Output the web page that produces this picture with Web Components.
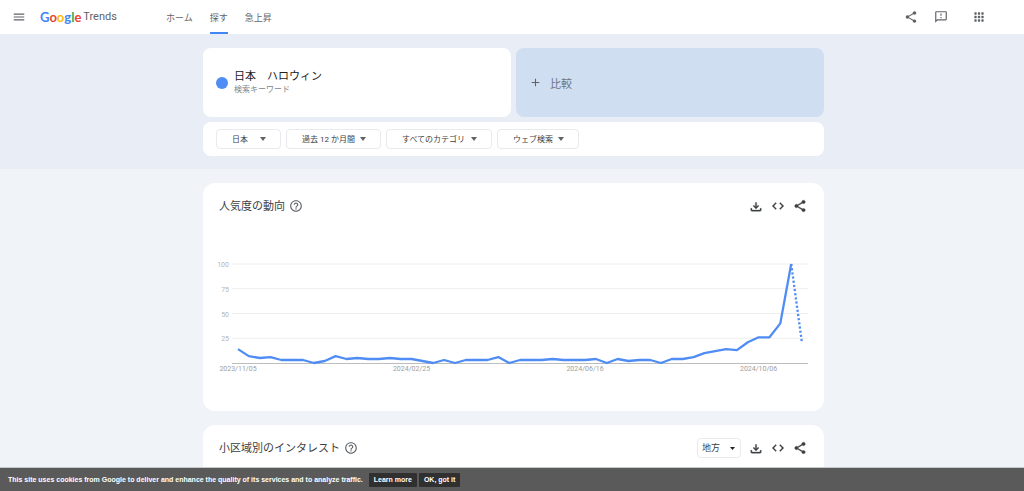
<!DOCTYPE html>
<html lang="ja">
<head>
<meta charset="utf-8">
<meta name="viewport" content="width=device-width, initial-scale=1">
<title>Google Trends</title>
<style>
    body {
        margin: 0;
        font-family: Roboto, "Noto Sans CJK JP", sans-serif;
        color: #3c4043;
    }
</style>
</head>
<body>
<trends-app></trends-app>

<script>
const ICONS = {
    menu: `<path d="M3 18h18v-2H3v2zm0-5h18v-2H3v2zm0-7v2h18V6H3z"/>`,
    share: `<path d="M18 16.100c-.8 0-1.400.3-2 .8l-7.100-4.200c.1-.2.1-.5.1-.7s0-.5-.1-.7L16 7.200c.5.500 1.200.8 2 .8 1.700 0 3-1.300 3-3s-1.300-3-3-3-3 1.300-3 3c0 .2 0 .5.1.7L8 9.800C7.500 9.300 6.800 9 6 9c-1.700 0-3 1.300-3 3s1.300 3 3 3c.8 0 1.500-.3 2-.8l7.100 4.200c-.1.2-.1.400-.1.600 0 1.600 1.300 2.900 3 2.900s3-1.300 3-2.900-1.300-2.900-3-2.900z"/>`,
    feedback: `<path d="M20 2H4c-1.100 0-2 .9-2 2v18l4-4h14c1.100 0 2-.9 2-2V4c0-1.100-.9-2-2-2zm0 14H5.200L4 17.200V4h16v12zM11 12h2v2h-2zm0-6h2v4h-2z"/>`,
    apps: [5, 11, 17].map(y => [5, 11, 17].map(x => `<rect x="${x - 1}" y="${y - 1}" width="4" height="4" rx="1"/>`).join("")).join(""),
    add: `<path d="M19 13h-6v6h-2v-6H5v-2h6V5h2v6h6v2z"/>`,
    help: `<path d="M11 18h2v-2h-2v2zm1-16C6.480 2 2 6.480 2 12s4.480 10 10 10 10-4.480 10-10S17.520 2 12 2zm0 18c-4.410 0-8-3.590-8-8s3.590-8 8-8 8 3.590 8 8-3.590 8-8 8zm0-14c-2.210 0-4 1.790-4 4h2c0-1.100.9-2 2-2s2 .9 2 2c0 2-3 1.750-3 5h2c0-2.250 3-2.500 3-5 0-2.210-1.790-4-4-4z"/>`,
    download: `<path d="M19 16v3H5v-3H3v3c0 1.100.9 2 2 2h14c1.100 0 2-.9 2-2v-3h-2zm-2-4l-1.400-1.400L13 13.200V6h-2v7.200L8.400 10.600 7 12l5 5 5-5z"/>`,
    code: `<path d="M9.400 16.600L4.800 12l4.600-4.600L8 6l-6 6 6 6 1.400-1.400zm5.200 0l4.600-4.600-4.600-4.600L16 6l6 6-6 6-1.400-1.400z"/>`
}

function define(name, html) {
    customElements.define(name, class extends HTMLElement {
        constructor() {
            super()
            this.attachShadow({ mode: "open" }).innerHTML = html
        }
    })
}

class TrendsIcon extends HTMLElement {
    connectedCallback() {
        const root = this.shadowRoot ?? this.attachShadow({ mode: "open" })
        root.innerHTML = `
            <style>
                :host { display: inline-flex; width: 14px; height: 14px; flex: none; }
                svg {
                    width: 100%;
                    height: 100%;
                    fill: currentColor;
                    stroke: currentColor;
                    stroke-width: var(--icon-stroke, 0);
                }
            </style>
            <svg viewBox="0 0 24 24" aria-hidden="true">${ICONS[this.getAttribute("name")]}</svg>
        `
    }
}
customElements.define("trends-icon", TrendsIcon)

class IconButton extends HTMLElement {
    connectedCallback() {
        const root = this.shadowRoot ?? this.attachShadow({ mode: "open" })
        root.innerHTML = `
            <style>
                :host { display: inline-flex; flex: none; }
                button {
                    display: flex;
                    align-items: center;
                    justify-content: center;
                    width: 22px;
                    height: 22px;
                    padding: 0;
                    border: 0;
                    border-radius: 50%;
                    background: none;
                    color: inherit;
                    cursor: pointer;
                }
            </style>
            <button type="button" aria-label="${this.getAttribute("label")}">
                <trends-icon name="${this.getAttribute("icon")}"></trends-icon>
            </button>
        `
    }
}
customElements.define("icon-button", IconButton)

class FilterSelect extends HTMLElement {
    connectedCallback() {
        const root = this.shadowRoot ?? this.attachShadow({ mode: "open" })
        const options = this.getAttribute("options").split("|")
        root.innerHTML = `
            <style>
                :host { display: inline-grid; align-items: center; color: #3c4043; }
                select, svg { grid-area: 1 / 1; }
                select {
                    appearance: none;
                    box-sizing: border-box;
                    width: 100%;
                    height: 20px;
                    margin: 0;
                    padding: 0 25px 0 15px;
                    border: 1px solid #e8eaed;
                    border-radius: 4px;
                    background: #fff;
                    color: inherit;
                    font: inherit;
                    font-size: 8px;
                }
                svg {
                    justify-self: end;
                    width: 6px;
                    height: 4px;
                    margin-right: 15px;
                    fill: #5f6368;
                    pointer-events: none;
                }
                :host([compact]) select { padding: 0 19px 0 4px; font-size: 9px; }
                :host([compact]) svg { width: 5px; height: 3px; margin-right: 6px; fill: #202124; }
            </style>
            <select aria-label="${this.getAttribute("label")}">
                ${options.map(text => `<option>${text}</option>`).join("")}
            </select>
            <svg viewBox="0 0 6 4" preserveAspectRatio="none" aria-hidden="true"><path d="M0 0h6L3 4z"/></svg>
        `
    }
}
customElements.define("filter-select", FilterSelect)

define("trends-header", `
    <style>
        :host {
            display: flex;
            align-items: center;
            height: 34px;
            flex: none;
            padding: 0 34px 0 8px;
            background: #fff;
            color: #5f6368;
        }
        .brand {
            display: flex;
            align-items: center;
            gap: 2px;
            min-width: 126px;
            margin-left: 10px;
            color: #5f6368;
            font-size: 11px;
            line-height: 16px;
            text-decoration: none;
        }
        .google { font-family: Lato, sans-serif; font-size: 13px; font-weight: 700; }
        .b { color: #4285f4; }
        .r { color: #ea4335; }
        .y { color: #fbbc04; }
        .g { color: #34a853; }
        nav { display: flex; align-self: stretch; gap: 17px; }
        nav a {
            display: flex;
            align-items: center;
            box-sizing: border-box;
            border-block: 2px solid transparent;
            color: inherit;
            font-size: 9px;
            text-decoration: none;
        }
        nav a[aria-current] { border-bottom-color: #4285f4; }
        .tools { display: flex; gap: 8px; margin-left: auto; }
        .apps { margin-left: 8px; }
    </style>
    <icon-button icon="menu" label="メニュー"></icon-button>
    <a class="brand" href="#"><span class="google"><span class="b">G</span><span class="r">o</span><span class="y">o</span><span class="b">g</span><span class="g">l</span><span class="r">e</span></span><span>Trends</span></a>
    <nav>
        <a href="#home">ホーム</a>
        <a href="#explore" aria-current="page">探す</a>
        <a href="#trending">急上昇</a>
    </nav>
    <div class="tools">
        <icon-button icon="share" label="共有"></icon-button>
        <icon-button icon="feedback" label="フィードバック"></icon-button>
        <icon-button class="apps" icon="apps" label="アプリ"></icon-button>
    </div>
`)

define("search-term", `
    <style>
        :host {
            display: flex;
            align-items: center;
            gap: 6px;
            padding: 1px 13px 0;
            border-radius: 8px;
            background: #fff;
        }
        .dot { width: 12px; height: 12px; border-radius: 50%; background: #4f8df5; }
        .term { color: #202124; font-size: 11px; line-height: 14px; white-space: pre; }
        .kind { color: #80868b; font-size: 8px; line-height: 12px; }
    </style>
    <span class="dot"></span>
    <div>
        <div class="term"><slot></slot></div>
        <div class="kind"><slot name="kind"></slot></div>
    </div>
`)

define("compare-button", `
    <style>
        :host { display: grid; }
        button {
            display: flex;
            align-items: center;
            gap: 8px;
            padding: 0 13px;
            border: 0;
            border-radius: 8px;
            background: #d0def1;
            color: #6b7684;
            font: inherit;
            font-size: 11px;
            cursor: pointer;
        }
        trends-icon { width: 13px; height: 13px; color: #5f6368; }
    </style>
    <button type="button"><trends-icon name="add"></trends-icon><slot></slot></button>
`)

define("explore-panel", `
    <style>
        :host {
            display: grid;
            gap: 5px;
            padding: 14px 200px 13px 203px;
            background: #e9eef6;
        }
        .terms { display: grid; grid-template-columns: 1fr 1fr; grid-auto-rows: 69px; gap: 5px; }
        .filters {
            display: flex;
            gap: 5px;
            padding: 7px 13px;
            border-radius: 8px;
            background: #fff;
        }
        .geo { min-width: 65px; }
    </style>
    <div class="terms">
        <search-term>日本　ハロウィン<span slot="kind">検索キーワード</span></search-term>
        <compare-button>比較</compare-button>
    </div>
    <div class="filters">
        <filter-select class="geo" label="地域" options="日本"></filter-select>
        <filter-select label="期間" options="過去 12 か月間"></filter-select>
        <filter-select label="カテゴリ" options="すべてのカテゴリ"></filter-select>
        <filter-select label="検索の種類" options="ウェブ検索"></filter-select>
    </div>
`)

define("widget-card", `
    <style>
        :host {
            display: block;
            padding: 12px 13px 35px 16px;
            border-radius: 12px;
            background: #fff;
        }
        header { display: flex; align-items: center; min-height: 22px; }
        h2 {
            margin: 2px 0 0;
            color: #3c4043;
            font-size: 11px;
            font-weight: 400;
            line-height: 16px;
        }
        .help { color: #5f6368; }
        .actions {
            display: flex;
            align-items: center;
            margin-left: auto;
            color: #3c4043;
            --icon-stroke: 0.6;
        }
        ::slotted([slot="action"]) { margin-right: 4px; }
    </style>
    <header>
        <h2><slot name="title"></slot></h2>
        <icon-button class="help" icon="help" label="ヘルプ"></icon-button>
        <div class="actions">
            <slot name="action"></slot>
            <icon-button icon="download" label="CSV"></icon-button>
            <icon-button icon="code" label="埋め込む"></icon-button>
            <icon-button icon="share" label="共有"></icon-button>
        </div>
    </header>
    <slot></slot>
`)

class TrendChart extends HTMLElement {
    static values = [
        14, 7, 5, 6, 3, 3, 3, 0, 2, 7, 4, 5, 4, 4, 5, 4, 4, 2,
        0, 3, 0, 3, 3, 3, 6, 0, 3, 3, 3, 4, 3, 3, 3, 4, 0, 4,
        2, 3, 3, 0, 4, 4, 6, 10, 12, 14, 13, 21, 26, 26, 40, 100, 20
    ]

    // week index -> label
    static dates = { 0: "2023/11/05", 16: "2024/02/25", 32: "2024/06/16", 48: "2024/10/06" }

    connectedCallback() {
        const root = this.shadowRoot ?? this.attachShadow({ mode: "open" })
        const { values, dates } = TrendChart
        const left = 19, right = 583, top = 8, base = 107
        const x = i => left + i * (right - left) / (values.length - 1)
        const y = v => base - v * (base - top) / 100
        const points = values.map((v, i) => `${x(i).toFixed(1)},${y(v).toFixed(1)}`)

        const grid = [25, 50, 75, 100].map(v => `
            <line class="grid" x1="13" x2="589" y1="${y(v)}" y2="${y(v)}"/>
            <text class="tick" x="10" y="${y(v) + 3}" text-anchor="end">${v}</text>
        `).join("")
        const labels = Object.entries(dates).map(([i, text]) =>
            `<text class="date" x="${x(i)}" y="115" text-anchor="middle">${text}</text>`
        ).join("")

        root.innerHTML = `
            <style>
                :host { display: block; margin: 39px 3px 0 0; }
                svg { display: block; width: 100%; overflow: visible; }
                text { font-family: Roboto, sans-serif; font-size: 7px; }
                .tick { fill: #b4b4b4; }
                .date { fill: #9e9e9e; }
                .grid { stroke: #eee; }
                .axis { stroke: #bdbdbd; }
                polyline { fill: none; stroke: #4f8df5; stroke-width: 2.3; stroke-linejoin: round; }
                .partial { stroke-dasharray: 2.2 2; }
            </style>
            <svg viewBox="0 0 589 120" role="img" aria-label="人気度の動向">
                ${grid}
                <line class="axis" x1="13" x2="589" y1="${base + 0.5}" y2="${base + 0.5}"/>
                ${labels}
                <polyline points="${points.slice(0, -1).join(" ")}"/>
                <polyline class="partial" points="${points.slice(-2).join(" ")}"/>
            </svg>
        `
    }
}
customElements.define("trend-chart", TrendChart)

define("cookie-bar", `
    <style>
        :host {
            display: flex;
            align-items: center;
            gap: 2px;
            flex: none;
            height: 23px;
            padding: 0 8px;
            border-top: 1px solid #c4c9cc;
            background: #5a5a5a;
            color: #fff;
            font-family: "Liberation Sans", Arial, sans-serif;
            font-size: 7px;
            font-weight: 700;
        }
        span { margin-right: 4px; }
        a, button {
            box-sizing: border-box;
            height: 14px;
            padding: 0 5px;
            border: 0;
            border-radius: 1px;
            background: #303030;
            color: inherit;
            font: inherit;
            line-height: 14px;
            text-decoration: none;
        }
    </style>
    <span>This site uses cookies from Google to deliver and enhance the quality of its services and to analyze traffic.</span>
    <a href="#cookies">Learn more</a>
    <button type="button">OK, got it</button>
`)

define("trends-app", `
    <style>
        :host { display: flex; flex-direction: column; height: 100vh; background: #f0f4f9; }
        main { flex: 1; min-height: 0; overflow-y: auto; scrollbar-width: none; }
        .widgets { display: grid; gap: 14px; padding: 14px 200px 14px 203px; }
    </style>
    <trends-header></trends-header>
    <main>
        <explore-panel></explore-panel>
        <div class="widgets">
            <widget-card>
                <span slot="title">人気度の動向</span>
                <trend-chart></trend-chart>
            </widget-card>
            <widget-card>
                <span slot="title">小区域別のインタレスト</span>
                <filter-select slot="action" compact label="地域区分" options="地方"></filter-select>
            </widget-card>
        </div>
    </main>
    <cookie-bar></cookie-bar>
`)
</script>
</body>
</html>
